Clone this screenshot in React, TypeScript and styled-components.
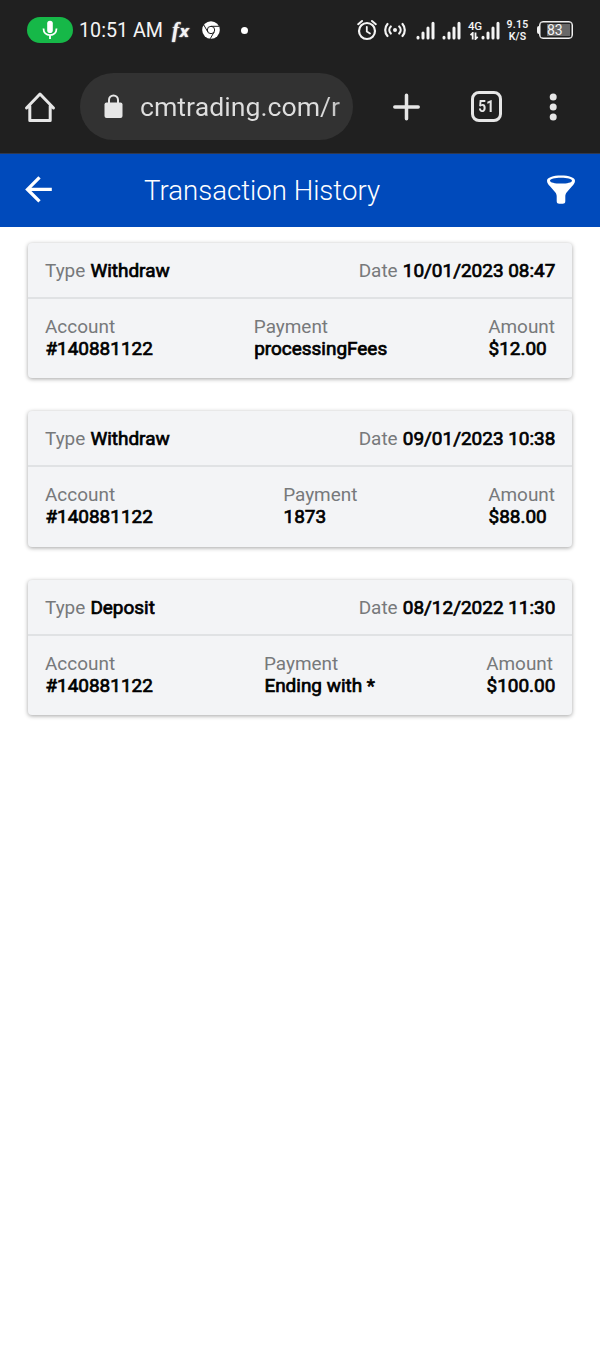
import React from "react";
import styled, { createGlobalStyle } from "styled-components";

const GlobalStyle = createGlobalStyle`
  * { box-sizing: border-box; }
  body { margin: 0; background: #fff; font-family: Roboto, "Liberation Sans", sans-serif; }
  svg { display: block; flex: none; }
`;

const Screen = styled.div`
  display: flex;
  flex-direction: column;
  width: 600px;
  min-height: 1367px;
  background: #fff;
`;

const StatusBar = styled.div`
  display: flex;
  align-items: center;
  height: 60px;
  padding: 0 27px;
  background: #202020;
  color: #f4f4f4;
`;

const MicPill = styled.div`
  display: flex;
  align-items: center;
  justify-content: center;
  width: 46px;
  height: 26px;
  border-radius: 13px;
  background: #16b848;
`;

const Clock = styled.div`
  width: 83px;
  margin: 2px 10px 0 6px;
  font-size: 19.7px;
  line-height: 24px;
  white-space: nowrap;
`;

const FxMark = styled.div`
  width: 20px;
  margin: -1px 10px 0 0;
  font: italic 700 21px/24px "Liberation Serif", serif;
  text-shadow: 0 0 1.5px #fff;
  white-space: nowrap;
`;

const FxVariable = styled.span`
  margin-left: 0.5px;
  font: italic 700 15px/20px "DejaVu Sans", sans-serif;
`;

const Dot = styled.i`
  width: 7px;
  height: 7px;
  margin-left: 21px;
  border-radius: 50%;
  background: #fff;
`;

const StatusIcons = styled.div`
  display: flex;
  align-items: center;
  gap: 7px;
  margin-left: auto;
`;

const SimSignals = styled.div`
  display: flex;
  gap: 7px;
  margin-left: 3px;
`;

const MobileData = styled.div`
  display: flex;
  align-items: center;
`;

const DataType = styled.div`
  width: 13px;
  font-size: 11.5px;
  font-weight: 500;
  line-height: 11px;
  letter-spacing: -0.4px;
  white-space: nowrap;
`;

const NetSpeed = styled.div`
  width: 23px;
  margin: 2px 1px 0 -1px;
  font-size: 10.5px;
  font-weight: 600;
  line-height: 12.5px;
  letter-spacing: 0.2px;
  text-align: center;
  white-space: nowrap;
`;

const Battery = styled.div`
  display: flex;
  align-items: center;
`;

const BatteryNub = styled.i`
  width: 2px;
  height: 8px;
  border-radius: 2px 0 0 2px;
  background: #f0f0f0;
`;

const BatteryBody = styled.div`
  width: 34px;
  height: 18px;
  padding: 2px 2px 2px 7px;
  border: 1px solid #f0f0f0;
  border-radius: 4px;
  box-shadow: inset 0 0 0 0.5px #f0f0f0;
`;

const BatteryLevel = styled.div`
  height: 12px;
  background: #686868;
  font-size: 14px;
  line-height: 13px;
  white-space: nowrap;
`;

const Toolbar = styled.div`
  display: flex;
  align-items: center;
  height: 94px;
  padding-left: 24px;
  background: #202020;
  border-bottom: 1px solid #30394f;
`;

const AddressBar = styled.div`
  display: flex;
  align-items: center;
  width: 273px;
  height: 67px;
  margin: 0 40px 0 24px;
  padding-left: 24px;
  border-radius: 34px;
  background: #323232;
`;

const Url = styled.div`
  width: 202px;
  margin: 1px 0 0 17px;
  overflow: hidden;
  font-size: 26.7px;
  line-height: 34px;
  white-space: nowrap;
  color: transparent;
  background: linear-gradient(90deg, #dedede 90%, #b8b8b8 100%);
  background-clip: text;
  -webkit-background-clip: text;
`;

const TabCount = styled.div`
  display: flex;
  align-items: center;
  justify-content: center;
  width: 31px;
  height: 31px;
  margin: 0 47px 0 50px;
  border: 3px solid #e6e6e6;
  border-radius: 8px;
`;

const TabNumber = styled.span`
  color: #e6e6e6;
  font-size: 16px;
  font-weight: 700;
  line-height: 20px;
  transform: scaleX(0.86);
`;

const AppBar = styled.header`
  display: flex;
  align-items: center;
  height: 72.5px;
  padding: 0 24px;
  background: #004abb;
`;

const Title = styled.h1`
  flex: 1;
  margin: 2px 0 0 90px;
  color: #fff;
  font-size: 27.6px;
  font-weight: 300;
  line-height: 34px;
`;

const CardList = styled.main`
  display: flex;
  flex-direction: column;
  gap: 33px;
  padding: 16px 28px;
`;

const Card = styled.article`
  height: 135.5px;
  border-radius: 4px;
  background: #f3f4f6;
  box-shadow: 0 1px 4px rgba(0, 0, 0, 0.36);
`;

const CardRow = styled.div<{ $head?: boolean }>`
  display: flex;
  justify-content: space-between;
  padding: 17px 17px 0;
  height: ${(p) => (p.$head ? "56px" : "79px")};
  border-bottom: ${(p) => (p.$head ? "2px solid #e0e2e4" : "0")};
`;

const Field = styled.div`
  font-size: 18.96px;
  line-height: 22px;
  white-space: nowrap;
`;

const Label = styled.span<{ $block?: boolean }>`
  display: ${(p) => (p.$block ? "block" : "inline")};
  color: #77797b;
`;

const Value = styled.span`
  margin: 0 -0.4px 0 0.4px;
  color: #000;
  -webkit-text-stroke: 0.7px #000;
`;

const Mic = () => (
  <svg width="16" height="20" viewBox="0 0 16 20">
    <rect x="5.2" y="0.8" width="5.6" height="12.2" rx="2.8" fill="#fff" />
    <path d="M1.5 8.5c0 4 2.8 6.6 6.5 6.6s6.500-2.600 6.500-6.600M8 15v4" fill="none" stroke="#fff" strokeWidth="1.8" />
  </svg>
);

const Chrome = () => (
  <svg width="18" height="18" viewBox="0 0 18 18">
    <circle cx="9" cy="9" r="8.8" fill="#fff" />
    <g fill="none" stroke="#202020" strokeWidth="1">
      <circle cx="9" cy="9" r="3.7" />
      <path d="M9 5.300h8M5.800 10.900l-4-6.900M12.200 10.900l-4 6.900" />
    </g>
  </svg>
);

const Alarm = () => (
  <svg width="20" height="22" viewBox="0 0 20 22" fill="none" stroke="#f4f4f4" strokeLinecap="round">
    <circle cx="10" cy="12" r="8" strokeWidth="2.2" />
    <path d="M9.800 7.800v4.700l3.200 2" strokeWidth="1.8" />
    <path d="M1.200 5.200 5 2M18.800 5.200 15 2" strokeWidth="2" />
  </svg>
);

const Hotspot = () => (
  <svg width="22" height="16" viewBox="0 0 22 16" fill="none" stroke="#f4f4f4" strokeWidth="2.200" strokeLinecap="round">
    <circle cx="11" cy="8" r="2" fill="#f4f4f4" stroke="none" />
    <path d="M6.800 4.500a5 5 0 0 0 0 7M15.200 4.500a5 5 0 0 1 0 7M3.500 2a9 9 0 0 0 0 12M18.500 2a9 9 0 0 1 0 12" />
  </svg>
);

const Signal = () => (
  <svg width="19" height="19" viewBox="0 0 19 19" stroke="#f4f4f4" strokeWidth="3" strokeLinecap="round">
    <path d="M2 16.200v.8M7 12v5M12 7v10M17 2.200V17" />
  </svg>
);

const DataArrows = () => (
  <svg width="12" height="8" viewBox="0 0 12 8" fill="none" stroke="#f4f4f4" strokeWidth="1.800">
    <path d="M4.700 7.500V1L2.500 3.200M7.500.5V7l2.200-2.200" />
  </svg>
);

const Home = () => (
  <svg width="32" height="32" viewBox="0 0 32 32" fill="none" stroke="#e6e6e6" strokeWidth="3" strokeLinecap="round" strokeLinejoin="round">
    <path d="M2.500 17 16 3l13.500 14M5.800 15v14.500h20.400V15" />
  </svg>
);

const Lock = () => (
  <svg width="19" height="25" viewBox="0 0 19 25">
    <rect x="0.500" y="8.500" width="18" height="15.500" rx="2" fill="#e6e6e6" />
    <path d="M5 9V6a4.500 4.500 0 0 1 9 0v3" fill="none" stroke="#e6e6e6" strokeWidth="2" />
  </svg>
);

const Plus = () => (
  <svg width="28" height="28" viewBox="0 0 28 28" stroke="#e6e6e6" strokeWidth="3.500" strokeLinecap="round">
    <path d="M13.500 2.300v23.400M1.800 14h23.400" />
  </svg>
);

const Menu = () => (
  <svg width="8" height="28" viewBox="0 0 8 28" fill="#e6e6e6">
    <circle cx="4.200" cy="4" r="3.500" />
    <circle cx="4.200" cy="14" r="3.500" />
    <circle cx="4.200" cy="24" r="3.500" />
  </svg>
);

const Back = () => (
  <svg width="30" height="30" viewBox="0 0 30 30" fill="none" stroke="#fff" strokeWidth="3.300">
    <path d="M27.800 14.400H4M15.500 2.400l-12 12 12 12" />
  </svg>
);

const Funnel = () => (
  <svg width="30" height="30" viewBox="0 0 30 30" fill="#fff">
    <path
      fillRule="evenodd"
      d="M15 .5C7 .5 1 2.500 1 5.700c0 2 1.200 3.600 3 5.600l5.200 6c1.200 1.600 1.500 2.600 1.500 4.400v4.500c0 1.800 1.200 2.500 2.500 2.500h3.600c1.300 0 2.500-.7 2.500-2.500v-4.500c0-1.800.3-2.800 1.500-4.400l5.200-6c1.800-2 3-3.600 3-5.600 0-3.200-6-5.200-14-5.200ZM15 2.800c6.200 0 11 1.200 11 2.900S21.200 8.600 15 8.600 4 7.400 4 5.700s4.800-2.900 11-2.900Z"
    />
  </svg>
);

const transactions = [
  { type: "Withdraw", date: "10/01/2023 08:47", account: "#140881122", payment: "processingFees", amount: "$12.00" },
  { type: "Withdraw", date: "09/01/2023 10:38", account: "#140881122", payment: "1873", amount: "$88.00" },
  { type: "Deposit", date: "08/12/2022 11:30", account: "#140881122", payment: "Ending with *", amount: "$100.00" },
];

export default function App() {
  return (
    <Screen>
      <GlobalStyle />
      <StatusBar>
        <MicPill><Mic /></MicPill>
        <Clock>10:51 AM</Clock>
        <FxMark>f<FxVariable>x</FxVariable></FxMark>
        <Chrome />
        <Dot />
        <StatusIcons>
          <Alarm />
          <Hotspot />
          <SimSignals>
            <Signal />
            <Signal />
          </SimSignals>
          <MobileData>
            <DataType>4G<DataArrows /></DataType>
            <Signal />
          </MobileData>
          <NetSpeed>9.15<br />K/S</NetSpeed>
          <Battery>
            <BatteryNub />
            <BatteryBody><BatteryLevel>83</BatteryLevel></BatteryBody>
          </Battery>
        </StatusIcons>
      </StatusBar>
      <Toolbar>
        <Home />
        <AddressBar>
          <Lock />
          <Url>cmtrading.com/r</Url>
        </AddressBar>
        <Plus />
        <TabCount><TabNumber>51</TabNumber></TabCount>
        <Menu />
      </Toolbar>
      <AppBar>
        <Back />
        <Title>Transaction History</Title>
        <Funnel />
      </AppBar>
      <CardList>
        {transactions.map((t) => (
          <Card key={t.date}>
            <CardRow $head>
              <Field><Label>Type</Label> <Value>{t.type}</Value></Field>
              <Field><Label>Date</Label> <Value>{t.date}</Value></Field>
            </CardRow>
            <CardRow>
              <Field><Label $block>Account</Label><Value>{t.account}</Value></Field>
              <Field><Label $block>Payment</Label><Value>{t.payment}</Value></Field>
              <Field><Label $block>Amount</Label><Value>{t.amount}</Value></Field>
            </CardRow>
          </Card>
        ))}
      </CardList>
    </Screen>
  );
}
